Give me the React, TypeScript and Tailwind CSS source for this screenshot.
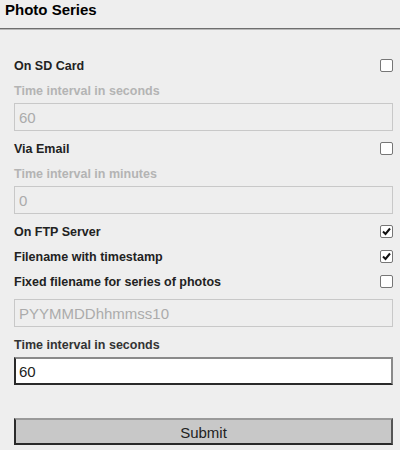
import { useState } from "react";

function Check({ checked }: { checked: boolean }) {
  return (
    <span className="flex h-[13px] w-[13px] items-center justify-center border border-[#767676] bg-white rounded-[2px]">
      {checked && (
        <svg width="9" height="9" viewBox="0 0 9 9">
          <path d="M1 4.5 L3.5 7 L8 1.5" fill="none" stroke="#111" strokeWidth="2" />
        </svg>
      )}
    </span>
  );
}

function CheckRow({ label, checked }: { label: string; checked: boolean }) {
  return (
    <div className="flex h-[25px] items-center justify-between">
      <span className="pt-[2px] text-[12.5px] font-bold text-[#222]">{label}</span>
      <Check checked={checked} />
    </div>
  );
}

function DisabledField({ label, value }: { label?: string; value: string }) {
  return (
    <>
      {label && (
        <div className="flex h-[25px] items-center pt-[2px] text-[12.5px] font-bold text-[#b4b4b4]">
          {label}
        </div>
      )}
      <input
        disabled
        value={value}
        readOnly
        className="h-[28px] w-full border border-[#c8c8c8] bg-[#eeeeee] px-[4px] text-[15px] text-[#ababab] outline-none"
      />
    </>
  );
}

export default function App() {
  const [seconds, setSeconds] = useState("60");

  return (
    <div className="min-h-[450px] w-[400px] bg-[#eeeeee] font-['Liberation_Sans',Arial,sans-serif]">
      <div className="h-[28px] pl-[5px] text-[15px] font-bold leading-[20px] text-black">
        Photo Series
      </div>
      <div className="h-[1px] bg-[#6e6e6e]" />
      <div className="h-[1px] bg-[#b8b8b8]" />

      <div className="flex flex-col pl-[14px] pr-[7px] pt-[23px]">
        <CheckRow label="On SD Card" checked={false} />
        <DisabledField label="Time interval in seconds" value="60" />

        <div className="mt-[5px]">
          <CheckRow label="Via Email" checked={false} />
        </div>
        <DisabledField label="Time interval in minutes" value="0" />

        <div className="mt-[5px]">
          <CheckRow label="On FTP Server" checked />
          <CheckRow label="Filename with timestamp" checked />
          <CheckRow label="Fixed filename for series of photos" checked={false} />
        </div>
        <div className="mt-[5px]">
          <DisabledField value="PYYMMDDhhmmss10" />
        </div>

        <div className="mt-[5px] flex h-[25px] items-center pt-[2px] text-[12.5px] font-bold text-[#333]">
          Time interval in seconds
        </div>
        <input
          value={seconds}
          onChange={(e) => setSeconds(e.target.value)}
          className="h-[28px] w-full border-2 border-b-[#2a2a2a] border-l-[#2a2a2a] border-r-[#8a8a8a] border-t-[#8a8a8a] bg-white px-[3px] text-[15px] text-[#222] outline-none"
        />

        <button className="mt-[33px] h-[27px] w-full border-2 border-b-[#2a2a2a] border-l-[#2a2a2a] border-r-[#555] border-t-[#9a9a9a] bg-[#c8c8c8] pt-[2px] text-[15px] text-[#222]">
          Submit
        </button>
      </div>
    </div>
  );
}
